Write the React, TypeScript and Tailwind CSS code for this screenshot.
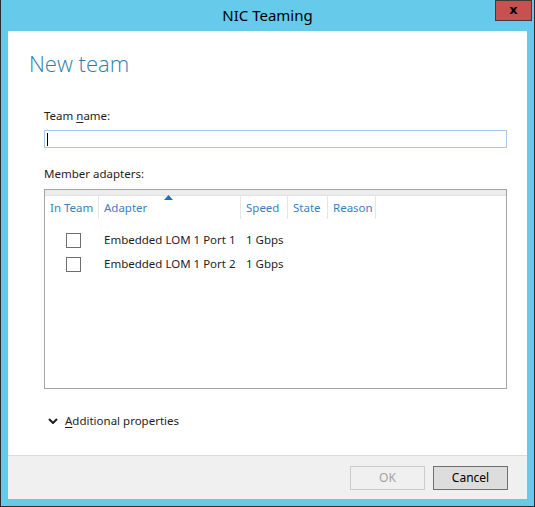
import React from "react";

// NIC Teaming dialog – Windows Server 2012 look

const font = { fontFamily: '"Noto Sans", "Open Sans", sans-serif' };

const columns = [
  { label: "In Team", w: "w-[54px]" },
  { label: "Adapter", w: "w-[142px]", sorted: true },
  { label: "Speed", w: "w-[47px]" },
  { label: "State", w: "w-[40px]" },
  { label: "Reason", w: "w-[48px]" },
];

const adapters = [
  { name: "Embedded LOM 1 Port 1", speed: "1 Gbps" },
  { name: "Embedded LOM 1 Port 2", speed: "1 Gbps" },
];

export default function App() {
  return (
    <div className="w-[535px] h-[507px] bg-[#66cbea] border-x border-b border-[#2d2d2d] flex flex-col relative" style={font}>
      {/* Title bar */}
      <div className="h-[31px] flex items-center justify-center text-[15px] text-black shrink-0 pb-[1px]">
        NIC Teaming
      </div>
      <button className="absolute top-0 right-[2px] w-[37px] h-[21px] bg-[#c75050] border border-[#3c3c3c] flex items-center justify-center">
        <span className="text-[13px] font-bold leading-none text-black -mt-[2px]" style={{ fontFamily: '"DejaVu Sans", sans-serif' }}>x</span>
      </button>

      <div className="flex-1 mx-[7px] mb-[7px] flex flex-col">
        {/* Main content */}
        <div className="flex-1 bg-white flex flex-col">
          <h1 className="ml-[21px] mt-[17px] text-[22px] font-light text-[#2e7eaa] leading-[30px]" style={{ fontFamily: '"Open Sans", sans-serif' }}>
            New team
          </h1>

          <div className="ml-[36px] mr-[20px] mt-[30px] text-[11.5px] text-[#1e1e1e]">
            <div className="leading-[16px]">
              Team <span className="underline underline-offset-2">n</span>ame:
            </div>
            <div className="mt-[6px] h-[18px] border border-[#a8c8e6] flex items-center pl-[2px]">
              <div className="w-[1px] h-[13px] bg-black" />
            </div>

            <div className="mt-[18px] leading-[16px]">Member adapters:</div>

            {/* Adapter list */}
            <div className="mt-[7px] h-[200px] border border-[#a5a5a5] flex flex-col">
              <div className="h-[6px] bg-[#ececec] border-b border-[#e2e2e2]" />
              <div className="flex h-[23px]">
                {columns.map((c) => (
                  <div key={c.label} className={`${c.w} relative border-r border-[#e6e6e6] flex items-center pl-[5px] text-[#3a80c6]`}>
                    {c.sorted && (
                      <svg className="absolute top-[-1px] left-[65px]" width="9" height="5" viewBox="0 0 9 5">
                        <path d="M0 5 L4.5 0 L9 5 Z" fill="#1f6fc0" />
                      </svg>
                    )}
                    {c.label}
                  </div>
                ))}
              </div>
              <div className="mt-[14px] flex flex-col gap-[10px]">
                {adapters.map((a) => (
                  <div key={a.name} className="flex items-center h-[14px]">
                    <div className="w-[54px] flex pl-[21px]">
                      <div className="w-[15px] h-[15px] border border-[#6f6f6f] bg-white" />
                    </div>
                    <div className="w-[142px] pl-[5px] whitespace-nowrap">{a.name}</div>
                    <div className="pl-[5px] whitespace-nowrap">{a.speed}</div>
                  </div>
                ))}
              </div>
            </div>

            <div className="mt-[24px] flex items-center gap-[7px]">
              <svg width="10" height="6" viewBox="0 0 10 6" className="ml-[4px]">
                <path d="M1 1 L5 5 L9 1" stroke="#1e1e1e" strokeWidth="2" fill="none" />
              </svg>
              <span className="leading-[16px]">
                <span className="underline underline-offset-2">A</span>dditional properties
              </span>
            </div>
          </div>
        </div>

        {/* Footer */}
        <div className="h-[44px] bg-[#f0f0f0] border-t border-[#dcdcdc] flex items-center justify-end gap-[8px] pr-[19px] pt-[1px] shrink-0">
          <button className="w-[75px] h-[24px] border border-[#cbcbcb] bg-[#f0f0f0] text-[12px] text-[#a3a3a3]">
            OK
          </button>
          <button className="w-[75px] h-[24px] border border-[#707070] bg-[#dddddd] text-[12px] text-black">
            Cancel
          </button>
        </div>
      </div>
    </div>
  );
}
